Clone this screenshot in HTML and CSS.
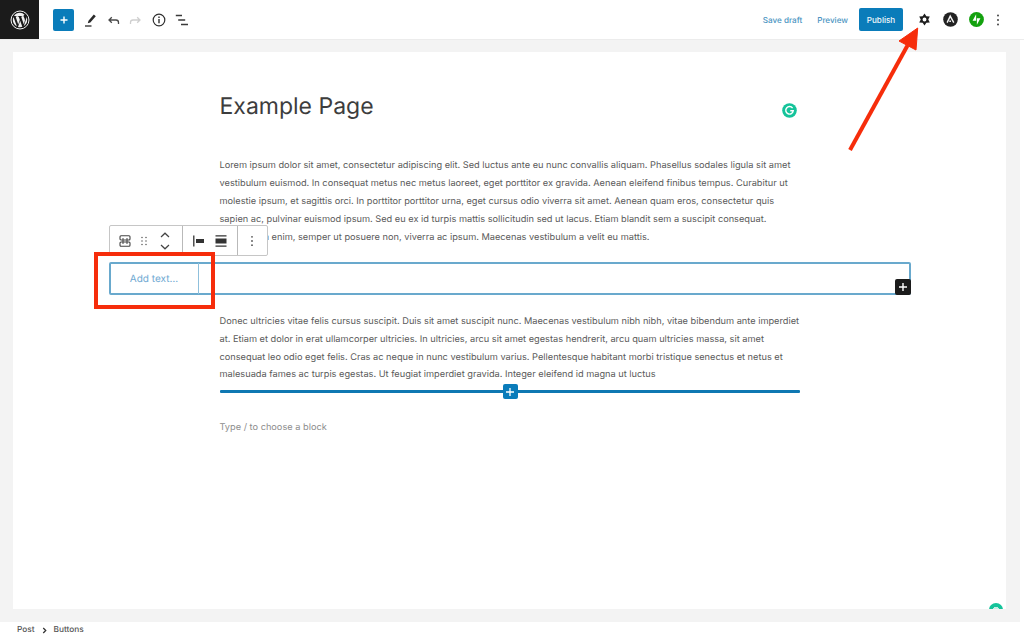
FILE: index.html
```html
<!DOCTYPE html>
<html lang="en">
<head>
<meta charset="utf-8">
<title>Example Page</title>
<link rel="stylesheet" href="styles.css">
</head>
<body>
<div class="app">
  <header class="topbar">
    <div class="left">
      <div class="wp-logo">
        <svg width="20" height="20" viewBox="0 0 24 24"><circle cx="12" cy="12" r="10.800" fill="none" stroke="#f1f1f1" stroke-width="1.200"/><path fill="#f1f1f1" d="M3.400 12c0 3.400 2 6.300 4.900 7.700L4.200 8.500A8.600 8.600 0 0 0 3.400 12zm14.300-.4c0-1.100-.4-1.800-.7-2.400-.4-.7-.8-1.200-.8-1.900 0-.7.600-1.400 1.400-1.400h.1A8.600 8.600 0 0 0 12 3.400a8.600 8.600 0 0 0-7.200 3.900h.6c.9 0 2.300-.1 2.300-.1.500 0 .5.700.1.700 0 0-.5.100-1 .1l3.100 9.300 1.900-5.600-1.300-3.700c-.5 0-.9-.1-.9-.1-.5 0-.4-.8.100-.7 0 0 1.400.1 2.300.1.900 0 2.300-.1 2.300-.1.500 0 .5.700.1.700 0 0-.5.100-1 .1l3.100 9.200.9-2.900c.4-1.200.6-2 .6-2.700zM12.200 12.800l-2.600 7.500a8.700 8.700 0 0 0 5.300-.1l-.1-.1-2.600-7.300zm7.400-4.900c0 .3.100.6.100.9 0 .9-.2 1.900-.7 3.100l-2.600 7.600a8.600 8.600 0 0 0 3.200-11.600z"/></svg>
      </div>
      <div class="tools">
        <button class="add-btn" type="button" aria-label="Add block">
          <svg width="12" height="12" viewBox="0 0 12 12"><path d="M6 2.500v7M2.500 6h7" stroke="#fff" stroke-width="1.400"/></svg>
        </button>
        <svg class="tool" width="16" height="16" viewBox="0 0 16 16"><path d="M6.500 8.800 11.800 2.500l2 1.700-5.500 6.300-2.500.8z" fill="#2a2a2a"/><path d="M3 14h6.500" stroke="#2a2a2a" stroke-width="1.300"/></svg>
        <svg class="tool" width="16" height="16" viewBox="0 0 16 16"><path d="M13.500 12v-1.500a2.500 2.500 0 0 0-2.500-2.500H4M6.800 5.200 4 8l2.800 2.800" fill="none" stroke="#4a4a4a" stroke-width="1.300"/></svg>
        <svg class="tool" width="16" height="16" viewBox="0 0 16 16"><path d="M2.500 12v-1.500A2.500 2.500 0 0 1 5 8h7M9.200 5.200 12 8l-2.800 2.800" fill="none" stroke="#cfcfcf" stroke-width="1.300"/></svg>
        <svg class="tool" width="16" height="16" viewBox="0 0 16 16"><circle cx="8" cy="8" r="5.800" fill="none" stroke="#2f2f2f" stroke-width="1.200"/><path d="M8 7v4.200M8 4.600v1.300" stroke="#2f2f2f" stroke-width="1.400"/></svg>
        <svg class="tool" width="16" height="16" viewBox="0 0 16 16"><path d="M1.800 3.500h6.200M4.200 8h7M7 12.500h7" stroke="#3a3a3a" stroke-width="1.300"/></svg>
      </div>
    </div>
    <div class="right">
      <span class="link save">Save draft</span>
      <span class="link preview">Preview</span>
      <button class="publish" type="button">Publish</button>
      <svg class="gear" width="13" height="13" viewBox="0 0 16 16"><path fill-rule="evenodd" fill="#1e1e1e" d="M8 .5 10.300 4 14.500 4.250 12.600 8 14.500 11.750 10.300 12 8 15.500 5.700 12 1.500 11.750 3.400 8 1.500 4.250 5.700 4ZM8 5.600A2.400 2.400 0 1 0 8 10.400 2.400 2.400 0 1 0 8 5.600Z"/></svg>
      <svg class="badge-a" width="15" height="15" viewBox="0 0 16 16"><circle cx="8" cy="8" r="7.800" fill="#222"/><path d="M4.400 11.300 7.700 4.400l3.800 6.900M6.700 9.800h1.800" fill="none" stroke="#f5f5f5" stroke-width="1.500"/></svg>
      <svg class="badge-j" width="15" height="15" viewBox="0 0 16 16"><circle cx="8" cy="8" r="7.900" fill="#13a10e"/><path d="M7.600 9.300V2.500L3.800 9.300zM8.400 6.700v6.800l3.800-6.800z" fill="#fff"/></svg>
      <svg class="dots" width="4" height="14" viewBox="0 0 4 14"><circle cx="2" cy="2.500" r=".9" fill="#333"/><circle cx="2" cy="7" r=".9" fill="#333"/><circle cx="2" cy="11.500" r=".9" fill="#333"/></svg>
    </div>
  </header>

  <main class="workspace">
    <section class="canvas">
      <div class="column">
        <h1 class="title">Example Page</h1>
        <p class="para first">Lorem ipsum dolor sit amet, consectetur adipiscing elit. Sed luctus ante eu nunc convallis aliquam. Phasellus sodales ligula sit amet<br>vestibulum euismod. In consequat metus nec metus laoreet, eget porttitor ex gravida. Aenean eleifend finibus tempus. Curabitur ut<br>molestie ipsum, et sagittis orci. In porttitor porttitor urna, eget cursus odio viverra sit amet. Aenean quam eros, consectetur quis<br>sapien ac, pulvinar euismod ipsum. Sed eu ex id turpis mattis sollicitudin sed ut lacus. Etiam blandit sem a suscipit consequat.<br>Fermentum enim, semper ut posuere non, viverra ac ipsum. Maecenas vestibulum a velit eu mattis.</p>
        <div class="buttons-block">
          <div class="add-text">Add text…</div>
          <span class="block-plus"><svg width="10" height="10" viewBox="0 0 10 10"><path d="M5 1v8M1 5h8" stroke="#fff" stroke-width="1.400"/></svg></span>
          <div class="block-toolbar">
            <div class="tb-group first-group">
              <svg width="12" height="14" viewBox="0 0 12 14"><rect x="1" y="1.700" width="10" height="4.300" rx="1" fill="none" stroke="#444" stroke-width="1.100"/><rect x="1" y="8" width="10" height="4.300" rx="1" fill="none" stroke="#444" stroke-width="1.100"/><path d="M4 4v6M8 4v6" stroke="#444" stroke-width="1"/></svg>
              <svg width="10" height="12" viewBox="0 0 10 12"><g fill="#666"><circle cx="3" cy="2.500" r=".8"/><circle cx="7" cy="2.500" r=".8"/><circle cx="3" cy="6" r=".8"/><circle cx="7" cy="6" r=".8"/><circle cx="3" cy="9.500" r=".8"/><circle cx="7" cy="9.500" r=".8"/></g></svg>
              <svg class="chev" width="12" height="20" viewBox="0 0 12 20"><path d="M2 6 6 2.200 10 6M2 14l4 3.800 4-3.800" fill="none" stroke="#444" stroke-width="1.200"/></svg>
            </div>
            <div class="tb-group second-group">
              <svg width="14" height="14" viewBox="0 0 14 14"><path d="M1.800 1.500v11" stroke="#333" stroke-width="1.300"/><rect x="4" y="5" width="8" height="4" fill="#333"/></svg>
              <svg width="14" height="14" viewBox="0 0 14 14"><path d="M1.500 1.800h11M1.500 12.200h11" stroke="#333" stroke-width="1.300"/><rect x="1.500" y="4.500" width="11" height="5" fill="#333"/></svg>
            </div>
            <div class="tb-group third-group">
              <svg width="4" height="12" viewBox="0 0 4 12"><circle cx="2" cy="1.800" r=".9" fill="#555"/><circle cx="2" cy="6" r=".9" fill="#555"/><circle cx="2" cy="10.200" r=".9" fill="#555"/></svg>
            </div>
          </div>
        </div>
        <p class="para second">Donec ultricies vitae felis cursus suscipit. Duis sit amet suscipit nunc. Maecenas vestibulum nibh nibh, vitae bibendum ante imperdiet<br>at. Etiam et dolor in erat ullamcorper ultricies. In ultricies, arcu sit amet egestas hendrerit, arcu quam ultricies massa, sit amet<br>consequat leo odio eget felis. Cras ac neque in nunc vestibulum varius. Pellentesque habitant morbi tristique senectus et netus et<br>malesuada fames ac turpis egestas. Ut feugiat imperdiet gravida. Integer eleifend id magna ut luctus</p>
        <div class="inserter">
          <span class="inserter-plus"><svg width="10" height="10" viewBox="0 0 10 10"><path d="M5 1v8M1 5h8" stroke="#fff" stroke-width="1.300"/></svg></span>
        </div>
        <p class="placeholder">Type / to choose a block</p>
      </div>
    </section>
    <svg class="grammarly" width="15" height="15" viewBox="0 0 16 16"><circle cx="8" cy="8" r="7.800" fill="#15c39a"/><path d="M11.300 5.500A4 4 0 1 0 12 8.300H8.800" fill="none" stroke="#fff" stroke-width="1.500"/></svg>
    <span class="grammarly-clip"><span class="grammarly-dome"></span></span>
  </main>

  <footer class="status">
    <span>Post</span>
    <svg width="5" height="7" viewBox="0 0 6 8"><path d="M1.500 1 4.500 4l-3 3" fill="none" stroke="#333" stroke-width="1.500"/></svg>
    <span>Buttons</span>
  </footer>
</div>

<div class="red-box"></div>
<svg class="red-arrow" width="90" height="130" viewBox="0 0 90 130"><path d="M4 124 61.500 19.500" stroke="#f62d0b" stroke-width="4" fill="none"/><path d="M71.700 2 53 15 70 24z" fill="#f62d0b" stroke="#f62d0b" stroke-width="1" stroke-linejoin="round"/></svg>
</body>
</html>
```

FILE: styles.css
```css
* { box-sizing: border-box; }
html, body { margin: 0; height: 100%; background: #fff; overflow: hidden; }
body { font-family: "Inter", "Liberation Sans", sans-serif; color: #3c3c3c; text-rendering: geometricPrecision; }
.app { height: 641px; display: flex; flex-direction: column; }

.topbar { height: 40px; flex: none; display: flex; justify-content: space-between; border-bottom: 1px solid #ececec; background: #fff; }
.left { display: flex; }
.wp-logo { width: 39px; height: 39px; background: #1b1b1b; display: flex; align-items: center; justify-content: center; }
.tools { display: flex; align-items: center; margin-left: 14px; }
.add-btn { width: 21px; height: 22px; padding: 0; border: 0; border-radius: 2px; background: #0a7cba; display: flex; align-items: center; justify-content: center; }
.tool { margin-left: 7px; }
.add-btn + .tool { margin-left: 8px; }

.right { display: flex; align-items: center; padding-right: 24px; }
.link { font-size: 8.100px; color: #4a94c2; font-weight: 500; }
.preview { margin-left: 15px; }
.publish { margin-left: 11px; width: 44px; height: 23px; padding: 0; border: 0; border-radius: 2px; background: #0a7cba; color: #f2f8fb; font: 500 8.100px "Inter", "Liberation Sans", sans-serif; }
.gear { margin-left: 15px; }
.badge-a { margin-left: 12px; }
.badge-j { margin-left: 11px; }
.dots { margin-left: 12px; }

.workspace { position: relative; flex: 1; margin-right: 4px; padding: 12px 14px 13px 13px; background: #f3f3f3; display: flex; }
.canvas { flex: 1; background: #fff; display: flex; justify-content: center; }
.column { width: 802px; flex: none; }
.title { margin: 39px 111px 0; font-size: 23px; line-height: 30px; font-weight: 400; color: #3d3d3d; }
.para { margin: 0 111px; font-size: 9.220px; line-height: 18px; color: #5a5a5a; white-space: nowrap; }
.para.first { margin-top: 36px; }
.para.second { margin-top: 18px; line-height: 17.750px; }

.buttons-block { position: relative; height: 33px; margin-top: 15px; border: 2px solid #69a9cd; border-radius: 2px; display: flex; }
.add-text { width: 88px; border-right: 1px solid #8fc0dc; margin-top: -1px; margin-bottom: -1px; display: flex; align-items: center; justify-content: center; font-size: 10px; color: #6fa9d2; }
.block-plus { position: absolute; right: -2px; bottom: -2px; width: 16px; height: 16px; border-radius: 2px; background: #1b1b1b; display: flex; align-items: center; justify-content: center; }
.block-toolbar { position: absolute; left: -2px; top: -39px; height: 31px; display: flex; background: #fff; border: 1px solid #c6c6c6; border-radius: 2px; }
.tb-group { height: 100%; display: flex; align-items: center; }
.tb-group + .tb-group { border-left: 1px solid #b9b9b9; }
.first-group { width: 72px; padding-left: 9px; gap: 8px; }
.chev { margin-left: 2px; }
.second-group { width: 55px; padding-left: 9px; gap: 8px; }
.third-group { width: 30px; justify-content: center; }

.inserter { position: relative; height: 3px; margin: 6px 111px 0; background: #0f78b2; border-radius: 1px; }
.inserter-plus { position: absolute; left: 283px; top: -6px; width: 15px; height: 15px; border-radius: 2px; background: #0a7cba; display: flex; align-items: center; justify-content: center; }
.placeholder { margin: 28px 111px 0; font-size: 9.220px; line-height: 14px; color: #8d8d8d; }

.grammarly { position: absolute; left: 782px; top: 63px; }
.grammarly-clip { position: absolute; left: 989px; top: 563px; width: 14px; height: 6px; overflow: hidden; }
.grammarly-dome { display: block; width: 14px; height: 14px; border-radius: 50%; background: radial-gradient(circle at 50% 50%, #c5efe5 0 3px, #15c39a 3.500px); }

.status { height: 19px; flex: none; display: flex; align-items: center; gap: 7px; padding: 0 0 3px 17px; font-size: 8.300px; color: #555; font-weight: 500; background: #fff; }

.red-box { position: absolute; left: 94px; top: 252px; width: 121px; height: 57px; border: 4px solid #f62d0b; }
.red-arrow { position: absolute; left: 846px; top: 26px; }
```
